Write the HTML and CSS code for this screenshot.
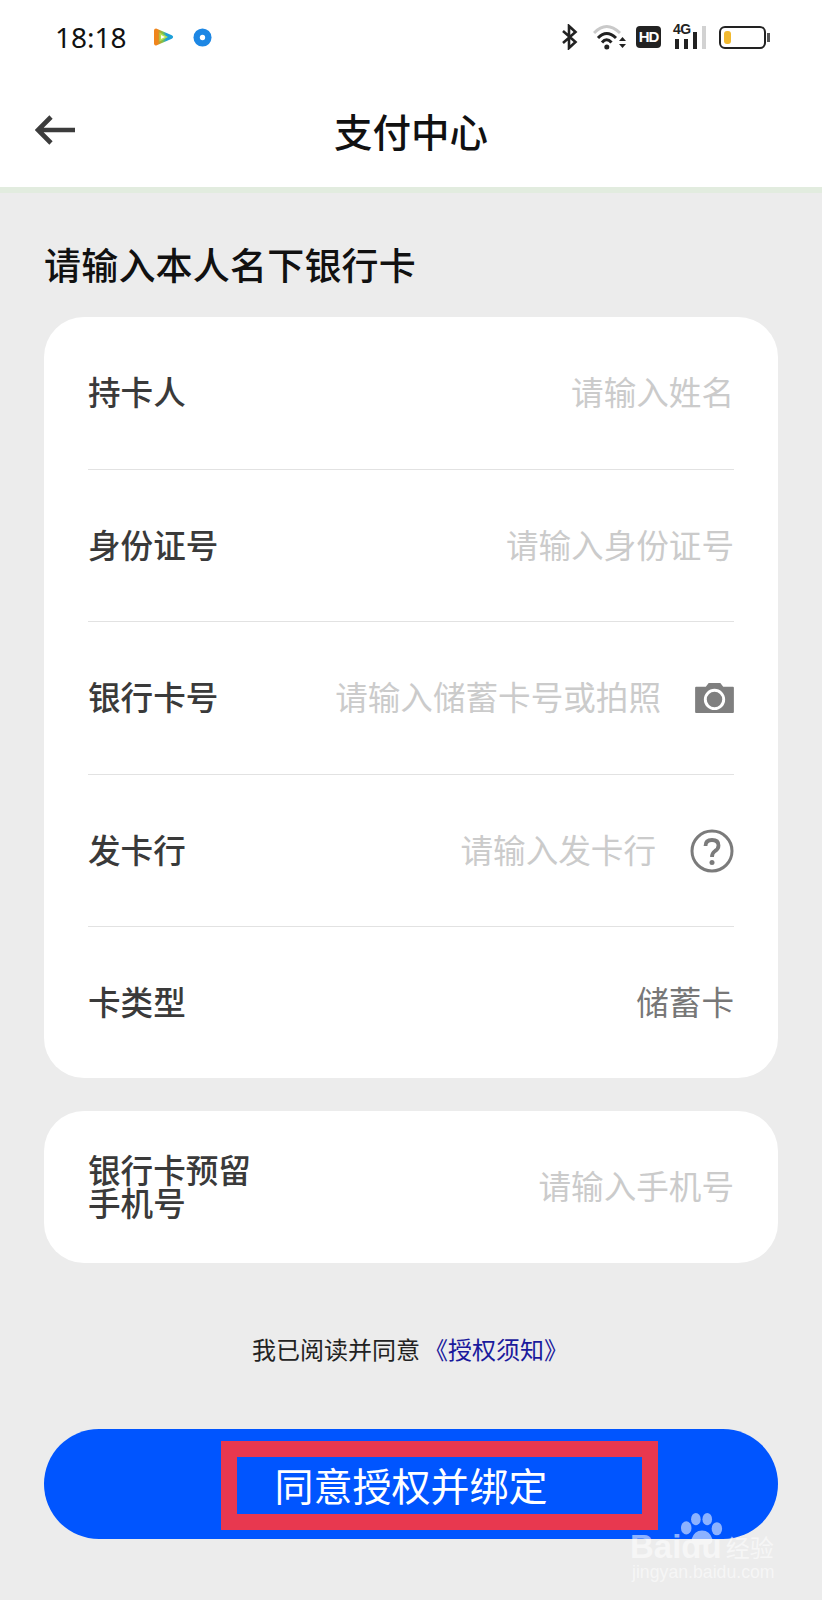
FILE: index.html
```html
<!DOCTYPE html>
<html lang="zh-CN">

<head>
    <meta charset="UTF-8">
    <meta name="viewport" content="width=device-width, initial-scale=1.0">
    <title>支付中心</title>
    <link rel="stylesheet" href="styles.css">
</head>

<body>
    <div class="page">
        <!-- status bar -->
        <div class="status">
            <span class="time">18:18</span>
            <svg class="play" width="21" height="18" viewBox="0 0 21 18">
                <defs>
                    <linearGradient id="playfill" x1="0" y1="0" x2="1" y2="0">
                        <stop offset="0.1" stop-color="#f0851c"/>
                        <stop offset="0.45" stop-color="#7cc34a"/>
                        <stop offset="0.7" stop-color="#1d9fd8"/>
                    </linearGradient>
                </defs>
                <path d="M3 2.5 L18 9 L3 15.5 Z" fill="url(#playfill)" stroke="url(#playfill)" stroke-width="4" stroke-linejoin="round"/>
                <path d="M6.5 4.5 L15 9 L6.5 13.5 Z" fill="#b5e04f"/>
                <path d="M8 7 L12 9 L8 11 Z" fill="#fff"/>
            </svg>
            <svg class="disc" width="19" height="19" viewBox="0 0 20 20">
                <circle cx="10" cy="10" r="9.5" fill="#1d87e4"/>
                <circle cx="10" cy="10" r="2.8" fill="#fff"/>
            </svg>
            <div class="status-right">
                <svg class="bt" width="17" height="26" viewBox="0 0 17 26">
                    <path d="M2 7 L14.5 18 L8 24 V2 L14.5 8 L2 19" fill="none" stroke="#222" stroke-width="2.6"/>
                </svg>
                <svg class="wifi" width="34" height="26" viewBox="0 0 34 26">
                    <path d="M1 9 Q13.5 -4 27 9" fill="none" stroke="#c9c9c9" stroke-width="3"/>
                    <path d="M5 14 Q13.5 5 23 14" fill="none" stroke="#222" stroke-width="3"/>
                    <path d="M9 18.5 Q13.5 13 18.5 18.5" fill="none" stroke="#222" stroke-width="3"/>
                    <circle cx="13.8" cy="23" r="2.5" fill="#222"/>
                    <path d="M26 17 L29.5 13 L33 17 Z M26 20 L33 20 L29.5 24 Z" fill="#222"/>
                </svg>
                <span class="hd">HD</span>
                <div class="signal">
                    <span class="net">4G</span>
                    <span class="bar b1"></span>
                    <span class="bar b2"></span>
                    <span class="bar b3"></span>
                    <span class="bar b4"></span>
                </div>
                <div class="battery"><span class="level"></span></div>
                <span class="battery-cap"></span>
            </div>
        </div>

        <!-- title bar -->
        <div class="header">
            <svg class="back" width="42" height="30" viewBox="0 0 42 30">
                <path d="M40 15 H4 M16 2 L3 15 L16 28" fill="none" stroke="#3c3c3c" stroke-width="4.6"/>
            </svg>
            <h1>支付中心</h1>
        </div>

        <div class="content">
            <h2>请输入本人名下银行卡</h2>

            <div class="card">
                <div class="row">
                    <span class="label">持卡人</span>
                    <span class="hint">请输入姓名</span>
                </div>
                <div class="row">
                    <span class="label">身份证号</span>
                    <span class="hint">请输入身份证号</span>
                </div>
                <div class="row">
                    <span class="label">银行卡号</span>
                    <span class="hint">请输入储蓄卡号或拍照</span>
                    <svg class="row-icon" width="39" height="31" viewBox="0 0 40 32">
                        <path d="M1 5 H11 L14 1 H26 L29 5 H39 Q40 5 40 6 V31 Q40 32 39 32 H1 Q0 32 0 31 V6 Q0 5 1 5 Z" fill="#7f7f7f"/>
                        <circle cx="20" cy="18" r="9.5" fill="#7f7f7f" stroke="#fff" stroke-width="3"/>
                    </svg>
                </div>
                <div class="row">
                    <span class="label">发卡行</span>
                    <span class="hint">请输入发卡行</span>
                    <svg class="row-icon" width="44" height="44" viewBox="0 0 44 44">
                        <circle cx="22" cy="22" r="20" fill="none" stroke="#7b7b7b" stroke-width="3"/>
                        <path d="M15.5 17 Q15.5 11 22 11 Q28.5 11 28.5 16.5 Q28.5 20 25 22 Q22 24 22 28" fill="none" stroke="#7b7b7b" stroke-width="3.8"/>
                        <circle cx="22" cy="33.5" r="2.5" fill="#7b7b7b"/>
                    </svg>
                </div>
                <div class="row row-end">
                    <span class="label">卡类型</span>
                    <span class="value">储蓄卡</span>
                </div>
            </div>

            <div class="card">
                <div class="row row-single">
                    <span class="label label-wrap">银行卡预留<br>手机号</span>
                    <span class="hint">请输入手机号</span>
                </div>
            </div>

            <p class="agree">我已阅读并同意<a class="link">《授权须知》</a></p>

            <div class="submit">
                同意授权并绑定
                <span class="mark"></span>
            </div>
        </div>

        <!-- watermark -->
        <div class="watermark">
            <svg class="paw" width="42" height="35" viewBox="0 0 48 40">
                <ellipse cx="6" cy="17" rx="6" ry="7.5" fill="#fff"/>
                <ellipse cx="17" cy="7" rx="5.5" ry="7" fill="#fff"/>
                <ellipse cx="30" cy="7" rx="5.5" ry="7" fill="#fff"/>
                <ellipse cx="41" cy="18" rx="6" ry="7.5" fill="#fff"/>
                <path d="M24 20 Q33 20 36 30 Q36 38 24 36 Q12 38 12 30 Q15 20 24 20 Z" fill="#fff"/>
            </svg>
            <div class="wm-logo">Baidu<span class="wm-cn">经验</span></div>
            <div class="wm-url">jingyan.baidu.com</div>
        </div>
    </div>
</body>

</html>
```

FILE: styles.css
```css
* {
    margin: 0;
    padding: 0;
    box-sizing: border-box;
}

body {
    background-color: #ececec;
    font-family: "Noto Sans CJK SC", "Noto Sans", sans-serif;
    overflow: hidden;
}

.page {
    position: relative;
    width: 822px;
    height: 1600px;
}

/* status bar */
.status {
    display: flex;
    align-items: center;
    height: 74px;
    padding: 0 52px 0 55px;
    background: #fff;
}

.time {
    font-family: "Noto Sans", sans-serif;
    font-size: 28px;
    color: #111;
    width: 98px;
}

.disc {
    margin-left: 19px;
}

.status-right {
    display: flex;
    align-items: center;
    margin-left: auto;
}

.bt {
    margin-right: 15px;
}

.wifi {
    margin-right: 9px;
}

.hd {
    width: 25px;
    height: 22px;
    margin-right: 12px;
    border-radius: 4px;
    background: #222;
    color: #fff;
    font-family: "Liberation Sans", sans-serif;
    font-size: 15px;
    font-weight: 700;
    letter-spacing: -1px;
    line-height: 22px;
    text-align: center;
}

.signal {
    position: relative;
    display: flex;
    align-items: flex-end;
    gap: 5px;
    width: 33px;
    height: 24px;
    margin-right: 13px;
    padding-left: 2px;
}

.net {
    position: absolute;
    left: 0;
    top: -4px;
    font-family: "Liberation Sans", sans-serif;
    font-size: 14px;
    font-weight: 700;
    letter-spacing: -0.5px;
    color: #222;
}

.bar {
    width: 4.5px;
    background: #222;
}

.b1 { height: 10px; }
.b2 { height: 10px; }
.b3 { height: 17px; }
.b4 { height: 23px; background: #d2d2d2; }

.battery {
    width: 47px;
    height: 23px;
    padding: 3px;
    border: 2px solid #222;
    border-radius: 6px;
}

.level {
    display: block;
    width: 7px;
    height: 100%;
    border-radius: 3px;
    background: #f2b92f;
}

.battery-cap {
    width: 3px;
    height: 9px;
    margin-left: 1px;
    background: #555;
}

/* title bar */
.header {
    position: relative;
    display: flex;
    align-items: center;
    justify-content: center;
    height: 119px;
    padding-bottom: 2px;
    background: #fff;
    border-bottom: 6px solid #e2ecdf;
}

.back {
    position: absolute;
    left: 35px;
    top: 100%;
    margin-top: -72px;
}

.header h1 {
    font-size: 38.5px;
    font-weight: 500;
    color: #111;
    line-height: 50px;
}

/* form */
.content {
    padding: 0 44px;
}

.content h2 {
    padding-top: 46px;
    margin-bottom: 28px;
    font-size: 37px;
    font-weight: 500;
    letter-spacing: 0.2px;
    line-height: 50px;
    color: #111;
}

.card {
    margin-bottom: 33px;
    padding: 0 44px;
    background: #fff;
    border-radius: 40px;
}

.row {
    display: flex;
    align-items: center;
    height: 152.6px;
    padding-bottom: 4px;
    border-bottom: 1px solid #e2e2e2;
}

.row-end {
    height: 150.6px;
    border-bottom: 0;
}

.row-single {
    height: 152px;
    border-bottom: 0;
}

.label {
    font-size: 32.6px;
    font-weight: 500;
    color: #3a3a3a;
}

.label-wrap {
    line-height: 33px;
}

.hint {
    margin-left: auto;
    font-size: 32.6px;
    color: #cbcbcb;
}

.value {
    margin-left: auto;
    font-size: 32.6px;
    color: #777;
}

.row-icon {
    flex: none;
    margin-left: 34px;
    margin-top: 4px;
}

.agree {
    margin-top: 68px;
    padding-right: 2px;
    font-size: 24px;
    line-height: 36px;
    text-align: center;
    color: #222;
}

.link {
    margin-left: 4px;
    color: #1a1a9c;
}

.submit {
    position: relative;
    display: flex;
    align-items: center;
    justify-content: center;
    height: 110px;
    margin-top: 62px;
    border-radius: 55px;
    background: #0055ff;
    color: #fff;
    font-size: 39px;
}

/* red annotation box */
.mark {
    position: absolute;
    left: 177px;
    top: 12px;
    width: 437px;
    height: 89px;
    border: 16px solid #e8384f;
}

/* watermark */
.watermark {
    position: absolute;
    left: 630px;
    top: 1513px;
    width: 160px;
    color: #fff;
    opacity: 0.55;
}

.paw {
    position: absolute;
    left: 51px;
    top: 0;
}

.wm-logo {
    position: absolute;
    left: 0;
    top: 14px;
    display: flex;
    align-items: center;
    gap: 4px;
    font-family: "Liberation Sans", sans-serif;
    font-size: 33px;
    font-weight: 700;
    line-height: 40px;
    white-space: nowrap;
}

.wm-cn {
    font-family: "Noto Sans CJK SC", sans-serif;
    font-size: 24px;
    font-weight: 400;
}

.wm-url {
    position: absolute;
    left: 2px;
    top: 47px;
    font-family: "Liberation Sans", sans-serif;
    font-size: 17.7px;
    line-height: 24px;
    white-space: nowrap;
}
```
